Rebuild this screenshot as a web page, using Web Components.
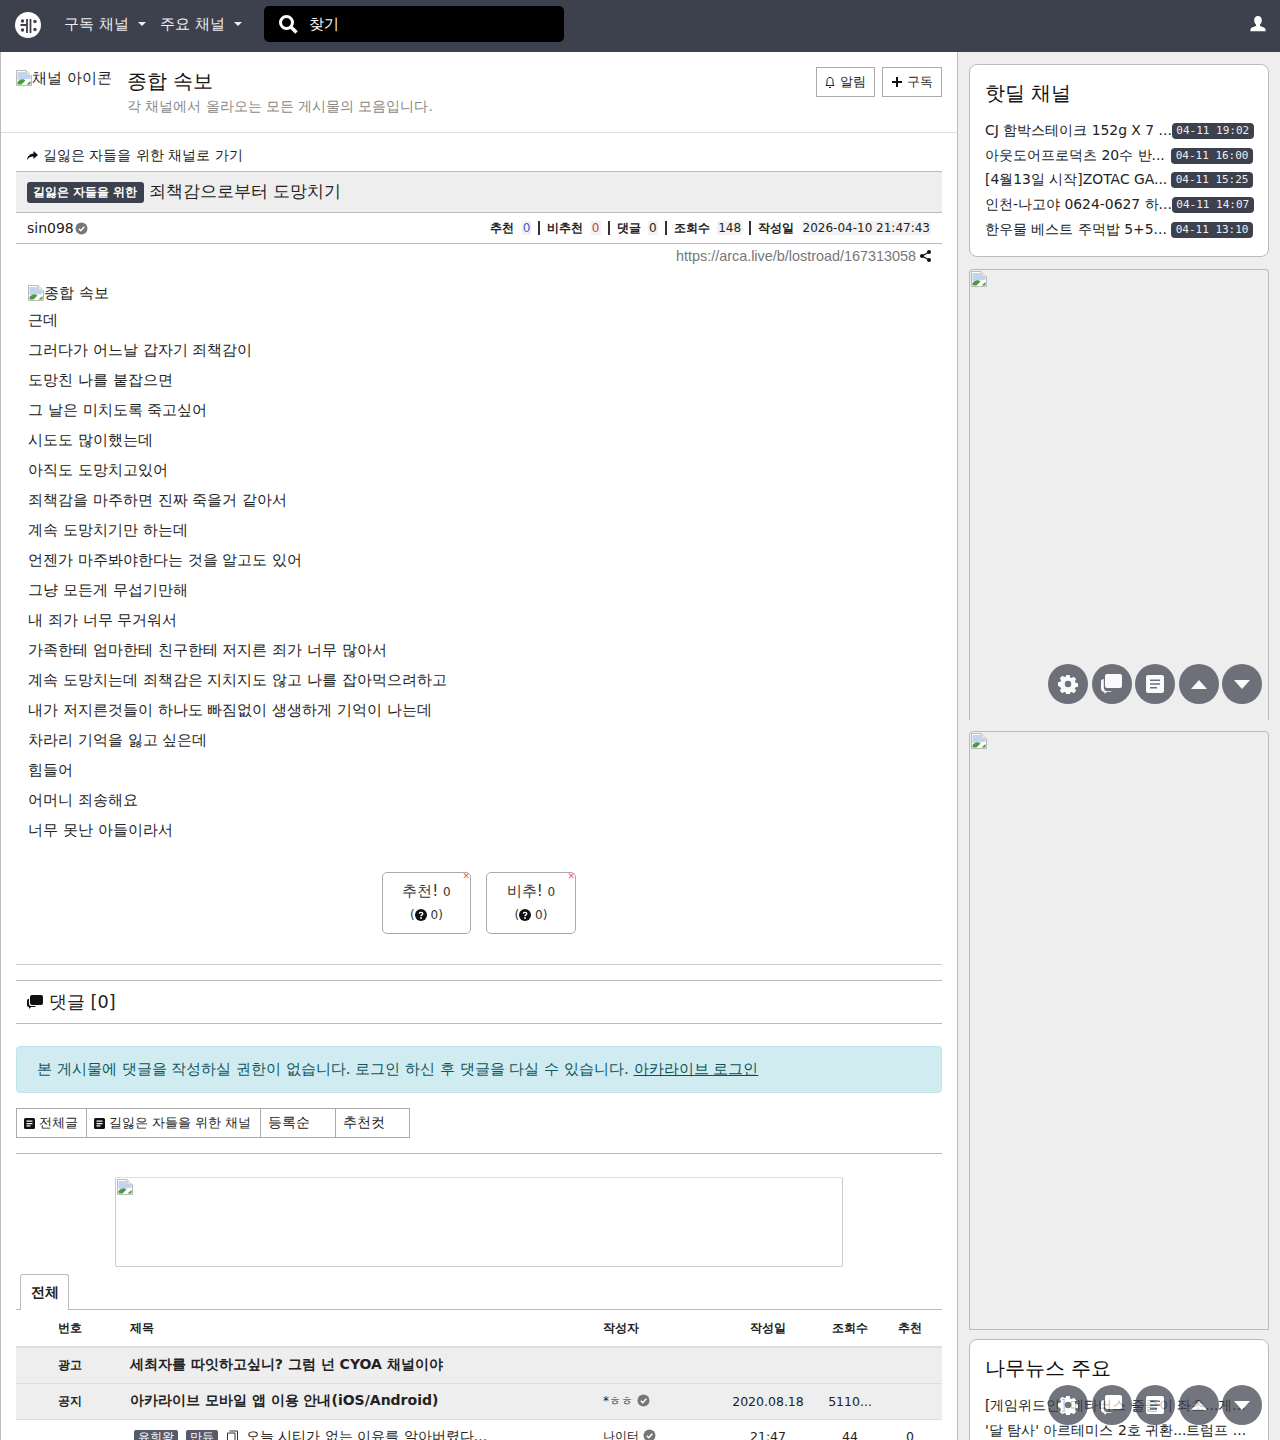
<!DOCTYPE html>
<html lang="ko">
<head>
<meta charset="utf-8">
<title>죄책감으로부터 도망치기</title>
<style>
  html, body { margin: 0; height: 1440px; overflow: hidden; }
  body {
    font-family: "DejaVu Sans", sans-serif;
    font-size: 14px;
    color: #212529;
    background: #eee;
  }
</style>
</head>
<body>
<arca-nav></arca-nav>
<arca-layout>
  <channel-head></channel-head>
  <arca-article></arca-article>
  <comment-area></comment-area>
  <article-list></article-list>
  <side-card slot="side" heading="핫딜 채널" items='[["CJ 함박스테이크 152g X 7 ...","04-11 19:02"],["아웃도어프로덕츠 20수 반...","04-11 16:00"],["[4월13일 시작]ZOTAC GA...","04-11 15:25"],["인천-나고야 0624-0627 하...","04-11 14:07"],["한우물 베스트 주먹밥 5+5...","04-11 13:10"]]'></side-card>
  <side-ad slot="side" style="height:451px"><float-tools></float-tools></side-ad>
  <side-ad slot="side" closed style="height:599px;margin-top:-1px"></side-ad>
  <side-card slot="side" heading="나무뉴스 주요" style="margin-top:-3px" items='[["[게임위드인] 메타버스 줄줄이 좌초...게...",""],["&#39;달 탐사&#39; 아르테미스 2호 귀환...트럼프 ...",""]]'></side-card>
  <float-tools slot="side" style="top:1333px"></float-tools>
</arca-layout>

<script>
const BROKEN = `<svg width="16" height="16" viewBox="0 0 16 16" style="flex:none"><path d="M.5.5H10L15.5 6v9.5H.5z" fill="#fff" stroke="#bbb"/><path d="M10 .5V6h5.5" fill="#e4e4e4" stroke="#bbb"/><path d="M1.5 2h8v4h5v3L1.5 10z" fill="#c3d4f3"/><path d="M1.5 14.5V12c3-3 5-3.5 8-1.5l-4 4z" fill="#4b9a3c"/><path d="M10.5 14.5l4-3.5v3.5z" fill="#4b9a3c"/></svg>`;
const CHECK = `<svg width="13" height="13" viewBox="0 0 13 13" style="vertical-align:-2px"><circle cx="6.5" cy="6.5" r="6" fill="#777"/><path d="M3.8 6.7l2 2 3.5-4" fill="none" stroke="#fff" stroke-width="1.5"/></svg>`;
const DOC = `<svg width="11" height="11" viewBox="0 0 11 11" style="vertical-align:-1px"><path fill-rule="evenodd" d="M1.5 0h8A1.5 1.5 0 0 1 11 1.5v8A1.5 1.5 0 0 1 9.5 11h-8A1.5 1.5 0 0 1 0 9.500v-8A1.5 1.5 0 0 1 1.5 0zM2.500 2.500v1.300h6V2.500zm0 2.400v1.300h6V4.900zm0 2.400v1.300h4V7.300z" fill="#111"/></svg>`;

class ArcaNav extends HTMLElement {
  constructor() {
    super();
    this.attachShadow({ mode: 'open' }).innerHTML = `
      <style>
        :host { display: flex; align-items: center; height: 52px; box-sizing: border-box; padding: 0 0 4px 15px; background: #3d414d; color: #fff; }
        .logo { width: 26px; height: 26px; flex: none; margin: 2px 23px 0 0; }
        .menu { display: flex; align-items: center; font-size: 14.700px; color: #f0f0f0; margin-right: 14.500px; white-space: nowrap; }
        .menu i { width: 0; height: 0; border: 4px solid transparent; border-top-color: #f0f0f0; border-bottom: 0; margin-left: 9px; }
        .search { display: flex; align-items: center; width: 300px; height: 36px; background: #000; border-radius: 5px; margin-left: 8px; font-size: 15px; }
        .search svg { margin: 0 11px 0 14px; }
        .user { margin-left: auto; margin-right: 14px; }
      </style>
      <svg class="logo" viewBox="0 0 26 26"><circle cx="13" cy="13" r="13" fill="#fff"/><path d="M12 7v14M15.500 7v14M5.500 13H12" stroke="#3d414d" stroke-width="1.800" fill="none"/><circle cx="7.500" cy="9" r="1.700" fill="#3d414d"/><circle cx="7.500" cy="18" r="1.700" fill="#3d414d"/><circle cx="20" cy="9.500" r="1.700" fill="#3d414d"/><circle cx="20" cy="17.500" r="1.700" fill="#3d414d"/></svg>
      <div class="menu">구독 채널<i></i></div>
      <div class="menu">주요 채널<i></i></div>
      <div class="search">
        <svg width="20" height="20" viewBox="0 0 20 20"><circle cx="8.500" cy="8.500" r="6" fill="none" stroke="#fff" stroke-width="3"/><path d="M13 13l5.500 5.500" stroke="#fff" stroke-width="3.500"/></svg>
        찾기
      </div>
      <svg class="user" width="16" height="16" viewBox="0 0 16 16"><path fill="#fff" d="M8 0c2.500 0 3.800 1.800 3.800 4.300 0 1.700-.7 3.400-1.800 4.200v1.300c0 .6 4.800 1.500 5.400 3.200.2.600.2 1.500.2 2.200H.4c0-.7 0-1.600.2-2.200C1.200 11.300 6 10.400 6 9.800V8.500C4.900 7.700 4.200 6 4.200 4.300 4.200 1.800 5.500 0 8 0z"/></svg>`;
  }
}

class ArcaLayout extends HTMLElement {
  constructor() {
    super();
    this.attachShadow({ mode: 'open' }).innerHTML = `
      <style>
        :host { display: grid; grid-template-columns: 958px 322px; position: relative; }
        main { background: #fff; border: solid #bbb; border-width: 0 1px; height: 1388px; overflow: hidden; box-sizing: border-box; }
        aside { padding: 12px 11px 0; display: flex; flex-direction: column; gap: 12px; height: 1388px; box-sizing: border-box; overflow: hidden; }
      </style>
      <main><slot></slot></main>
      <aside><slot name="side"></slot></aside>`;
  }
}

class ChannelHead extends HTMLElement {
  constructor() {
    super();
    this.attachShadow({ mode: 'open' }).innerHTML = `
      <style>
        :host { display: flex; height: 81px; box-sizing: border-box; border-bottom: 1px solid #ddd; padding: 15px 15px 0; }
        .icon { display: flex; align-items: flex-start; width: 95px; height: 19px; overflow: hidden; font-size: 15px; color: #222; margin: 1px 16px 0 0; white-space: nowrap; line-height: 20px; }
        .icon svg { margin-top: 2px; }
        h1 { font-size: 20px; font-weight: 400; margin: -1px 0 0; line-height: 30px; color: #111; }
        p { margin: -1px 0 0; color: #888; font-size: 13.500px; line-height: 22px; }
        .btns { margin-left: auto; display: flex; gap: 7px; align-items: flex-start; }
        .btn { display: flex; align-items: center; justify-content: center; gap: 5px; height: 30px; box-sizing: border-box; border: 1px solid #aaa; font-size: 13px; color: #222; }
      </style>
      <div class="icon">${BROKEN}채널 아이콘</div>
      <div><h1>종합 속보</h1><p>각 채널에서 올라오는 모든 게시물의 모음입니다.</p></div>
      <div class="btns">
        <div class="btn" style="width:59px"><svg width="10" height="13" viewBox="0 0 10 13"><path d="M5 1.500c-2 0-3 1.500-3 3.500v3L1 9.500h8L8 8V5c0-2-1-3.500-3-3.500zM4 11.500h2" fill="none" stroke="#222"/></svg>알림</div>
        <div class="btn" style="width:60px"><svg width="10" height="10" viewBox="0 0 10 10"><path d="M5 0v10M0 5h10" stroke="#111" stroke-width="2"/></svg>구독</div>
      </div>`;
  }
}

class ArcaArticle extends HTMLElement {
  constructor() {
    super();
    const lines = ['그러다가 어느날 갑자기 죄책감이', '도망친 나를 붙잡으면', '그 날은 미치도록 죽고싶어', '시도도 많이했는데', '아직도 도망치고있어', '죄책감을 마주하면 진짜 죽을거 같아서', '계속 도망치기만 하는데', '언젠가 마주봐야한다는 것을 알고도 있어', '그냥 모든게 무섭기만해', '내 죄가 너무 무거워서', '가족한테 엄마한테 친구한테 저지른 죄가 너무 많아서', '계속 도망치는데 죄책감은 지치지도 않고 나를 잡아먹으려하고', '내가 저지른것들이 하나도 빠짐없이 생생하게 기억이 나는데', '차라리 기억을 잃고 싶은데', '힘들어', '어머니 죄송해요', '너무 못난 아들이라서'];
    const stat = (label, val, cls = '') => `<b>${label}</b><span class="v ${cls}">${val}</span>`;
    const q = () => `<svg width="12" height="12" viewBox="0 0 12 12"><circle cx="6" cy="6" r="6" fill="#111"/><path d="M4.200 4.600C4.400 3 7.800 3 7.800 4.800 7.800 6 6 5.800 6 7.200" fill="none" stroke="#fff" stroke-width="1.300"/><circle cx="6" cy="9" r=".9" fill="#fff"/></svg>`;
    this.attachShadow({ mode: 'open' }).innerHTML = `
      <style>
        :host { display: block; padding: 0 15px; }
        .back { height: 38px; display: flex; align-items: center; gap: 5px; padding: 7px 12px 0 11px; box-sizing: border-box; font-size: 13.900px; color: #222; }
        .title { height: 42px; box-sizing: border-box; background: #eee; border: solid #bbb; border-width: 1px 0; display: flex; align-items: center; padding: 0 0 2px 11px; font-size: 17px; color: #222; }
        .badge { background: #3d414d; color: #fff; font-size: 12px; font-weight: 700; height: 21px; line-height: 21px; padding: 0 6.500px 0 6px; border-radius: 3px; margin: 2px 5px 0 0; }
        .info { height: 30px; border-bottom: 1px solid #bbb; display: flex; align-items: center; padding: 0 11px 0 11px; font-size: 14px; color: #222; }
        .author svg { margin-left: 1px; }
        .stats { margin-left: auto; display: flex; align-items: center; font-size: 12px; }
        .stats b { font-size: 12px; }
        .v { background: #f2f2f2; margin-left: 7.500px; padding: 0 1px; }
        .blue { color: #3d5fd0; }
        .red { color: #c44; }
        .sep { width: 2px; height: 14px; background: #333; margin: 0 7px; }
        .url { height: 24px; display: flex; align-items: center; justify-content: flex-end; padding-right: 11px; gap: 4px; font: 14.400px "Liberation Sans", sans-serif; color: #777; }
        .body { padding: 10px 12px 0; font-size: 15px; color: #222; }
        .alt { display: flex; height: 30px; align-items: center; }
        .body p { margin: 0; height: 30px; line-height: 30px; }
        .votes { display: flex; justify-content: center; gap: 15px; margin: 27px 0 30px; }
        .vote { position: relative; width: 89px; height: 62px; box-sizing: border-box; border: 1px solid #aaa; border-radius: 5px; text-align: center; color: #333; padding-top: 8px; font-size: 15px; line-height: 20px; }
        .vote + .vote { width: 90px; }
        .vote small { font-size: 12px; }
        .vote div { font-size: 12px; margin-top: 3px; }
        .vote svg { vertical-align: -2px; }
        .x { position: absolute; top: -1px; right: 0; color: #e66; font-size: 9px; line-height: 9px; }
        hr { border: 0; border-top: 1px solid #ccc; margin: 0; }
      </style>
      <div class="back"><svg width="11" height="9" viewBox="0 0 11 9"><path d="M6.500 0L11 4 6.500 8V5.500C3.500 5.500 1.500 6.500 0 9c.3-3.500 2.500-6 6.500-6.500z" fill="#111"/></svg>길잃은 자들을 위한 채널로 가기</div>
      <div class="title"><span class="badge">길잃은 자들을 위한</span>죄책감으로부터 도망치기</div>
      <div class="info">
        <span class="author">sin098${CHECK}</span>
        <div class="stats">
          ${stat('추천', 0, 'blue')}<i class="sep"></i>${stat('비추천', 0, 'red')}<i class="sep"></i>${stat('댓글', 0)}<i class="sep"></i>${stat('조회수', 148)}<i class="sep"></i>${stat('작성일', '2026-04-10 21:47:43')}
        </div>
      </div>
      <div class="url">https://arca.live/b/lostroad/167313058<svg width="11" height="12" viewBox="0 0 11 12"><circle cx="2" cy="6" r="2" fill="#111"/><circle cx="9" cy="2" r="2" fill="#111"/><circle cx="9" cy="10" r="2" fill="#111"/><path d="M2 6l7-4M2 6l7 4" stroke="#111" stroke-width="1.300"/></svg></div>
      <div class="body">
        <div class="alt">${BROKEN}종합 속보</div>
        <p style="margin-top:-3px">근데</p>
        ${lines.map(l => `<p>${l}</p>`).join('')}
        <div class="votes">
          <div class="vote"><span class="x">✕</span>추천! <small>0</small><div>(${q()} 0)</div></div>
          <div class="vote"><span class="x">✕</span>비추! <small>0</small><div>(${q()} 0)</div></div>
        </div>
      </div>
      <hr>`;
  }
}

class CommentArea extends HTMLElement {
  constructor() {
    super();
    this.attachShadow({ mode: 'open' }).innerHTML = `
      <style>
        :host { display: block; padding: 15px 15px 0; }
        .head { height: 44px; box-sizing: border-box; border: solid #bbb; border-width: 1px 0; display: flex; align-items: center; gap: 6px; padding: 0 0 1px 11px; font-size: 17.600px; color: #222; }
        .alert { margin-top: 22px; height: 47px; box-sizing: border-box; background: #d1ecf1; border: 1px solid #bee5eb; border-radius: 4px; color: #0c5460; padding: 0 20px 1px; display: flex; align-items: center; font-size: 15px; white-space: pre; }
        .alert u { color: #0b4f5a; }
        .tabs { display: flex; margin-top: 15px; }
        .tab { box-sizing: border-box; height: 30px; border: 1px solid #aaa; margin-left: -1px; display: flex; align-items: center; padding: 0 7px; font-size: 13px; gap: 4px; color: #222; white-space: nowrap; }
        .tab:first-child { margin-left: 0; }
        .plain { width: 76px; font-size: 14px; padding-bottom: 1px; }
        hr { border: 0; border-top: 1px solid #bbb; margin: 15px 0 0; }
      </style>
      <div class="head"><svg width="16" height="14" viewBox="0 0 16 14"><path d="M5 0h9a2 2 0 0 1 2 2v6a2 2 0 0 1-2 2H5a2 2 0 0 1-2-2V2a2 2 0 0 1 2-2z" fill="#111"/><path d="M1.500 4H2v5c0 1 1 2 2 2h5l-1 1H4l-2 2v-2c-1 0-2-.5-2-2V5.500C0 4.700.7 4 1.500 4z" fill="#111"/></svg>댓글 [0]</div>
      <div class="alert">본 게시물에 댓글을 작성하실 권한이 없습니다. 로그인 하신 후 댓글을 다실 수 있습니다. <u>아카라이브 로그인</u></div>
      <div class="tabs">
        <div class="tab" style="width:71px">${DOC}전체글</div>
        <div class="tab" style="width:175px">${DOC}길잃은 자들을 위한 채널</div>
        <div class="tab plain">등록순</div>
        <div class="tab plain" style="width:75px">추천컷</div>
      </div>
      <hr>`;
  }
}

class ArticleList extends HTMLElement {
  constructor() {
    super();
    this.attachShadow({ mode: 'open' }).innerHTML = `
      <style>
        :host { display: block; padding: 0 15px; }
        .ad { box-sizing: border-box; width: 728px; height: 90px; margin: 23px auto 7px; border: 1px solid #ccc; border-top-color: #ddd; border-radius: 2px; padding: 1px; }
        .tabs { height: 35px; border-bottom: 1px solid #bbb; padding-left: 4px; display: flex; }
        .tabs b { box-sizing: border-box; width: 49px; height: 36px; border: 1px solid #bbb; border-bottom: 0; border-radius: 3px 3px 0 0; background: #fff; text-align: center; line-height: 34px; font-size: 14.400px; color: #222; }
        .row { display: grid; grid-template-columns: 108px 479px 123px 84px 80px 40px; box-sizing: border-box; height: 36px; align-items: center; border-bottom: 1px solid #ddd; font-size: 12.500px; color: #222; white-space: nowrap; }
        .row > :nth-child(1), .row > :nth-child(4), .row > :nth-child(5), .row > :nth-child(6) { text-align: center; }
        .row > :nth-child(2) { padding-left: 6px; }
        .hd { height: 38px; border-bottom: 2px solid #ddd; padding-top: 1px; font-size: 12px; font-weight: 700; }
        .fill { background: #eee; padding-bottom: 1px; }
        .no { font-size: 12px; font-weight: 700; }
        .tt { font-weight: 700; font-size: 14px; }
        .sm { font-size: 12px; }
        .tag { display: inline-block; background: #555a68; color: #fff; font-size: 12px; font-style: normal; padding: 0 4px; border-radius: 2px; margin-right: 8px; line-height: 15px; }
        .last { height: 33px; border: 0; }
        .row > .ttl { padding-left: 10px; font-size: 14px; }
        svg { vertical-align: -2px; }
      </style>
      <div class="ad">${BROKEN}</div>
      <div class="tabs"><b>전체</b></div>
      <div class="row hd"><span>번호</span><span>제목</span><span>작성자</span><span>작성일</span><span>조회수</span><span>추천</span></div>
      <div class="row fill"><span class="no">광고</span><span class="tt">세최자를 따잇하고싶니? 그럼 넌 CYOA 채널이야</span><span></span><span></span><span></span><span></span></div>
      <div class="row fill"><span class="no">공지</span><span class="tt">아카라이브 모바일 앱 이용 안내(iOS/Android)</span><span class="sm">*ㅎㅎ ${CHECK}</span><span>2020.08.18</span><span>5110...</span><span></span></div>
      <div class="row last"><span></span><span class="ttl"><i class="tag">유희왕</i><i class="tag">만듀</i><svg width="13" height="13" viewBox="0 0 13 13" style="margin-right:7px"><path d="M3.500 1h8v10M1.500 3h7.500v9.500H1.500z" fill="none" stroke="#333"/></svg>오늘 시티가 없는 이유를 알아버렸다...</span><span class="sm">나이터 ${CHECK}</span><span>21:47</span><span>44</span><span>0</span></div>`;
  }
}

class SideCard extends HTMLElement {
  constructor() {
    super();
    this.attachShadow({ mode: 'open' }).innerHTML = `
      <style>
        :host { display: block; box-sizing: border-box; height: 193px; background: #fff; border: 1px solid #bbb; border-radius: 8px; padding: 13px 15px 0; flex: none; }
        h2 { margin: 0 0 11px; font-size: 20px; font-weight: 400; line-height: 30px; color: #111; }
        .item { display: flex; justify-content: space-between; align-items: center; height: 24.600px; font-size: 13.900px; color: #222; white-space: nowrap; }
        time { font: 11px "DejaVu Sans Mono", monospace; background: #3d414d; color: #eee; border-radius: 4px; padding: 0 4.500px; line-height: 16px; }
      </style>
      <h2></h2><div class="list"></div>`;
  }
  connectedCallback() {
    this.shadowRoot.querySelector('h2').textContent = this.getAttribute('heading');
    const list = this.shadowRoot.querySelector('.list');
    for (const [text, time] of JSON.parse(this.getAttribute('items'))) {
      const row = document.createElement('div');
      row.className = 'item';
      row.innerHTML = `<span></span>${time ? `<time>${time}</time>` : ''}`;
      row.firstChild.textContent = text;
      list.append(row);
    }
  }
}

class SideAd extends HTMLElement {
  constructor() {
    super();
    this.attachShadow({ mode: 'open' }).innerHTML = `
      <style>
        :host { display: block; position: relative; flex: none; box-sizing: border-box; border: 1px solid #bbb; border-bottom: 0; border-radius: 4px 4px 0 0; padding: 1px; }
        :host([closed]) { border-bottom: 1px solid #bbb; }
      </style>
      ${BROKEN}<slot></slot>`;
  }
}

class FloatTools extends HTMLElement {
  constructor() {
    super();
    this.attachShadow({ mode: 'open' }).innerHTML = `
      <style>
        :host { position: absolute; display: flex; gap: 3.500px; right: 6px; bottom: 16px; z-index: 2; }
        :host([slot]) { bottom: auto; right: 18px; }
        div { width: 40px; height: 40px; border-radius: 50%; background: #3d414d; opacity: .72; display: flex; align-items: center; justify-content: center; }
      </style>
      <div><svg width="20" height="20" viewBox="0 0 20 20"><path fill="#fff" fill-rule="evenodd" d="M8.300 1h3.400l.5 2.400 1.500.7 2.100-1.300 2.400 2.400-1.300 2.100.7 1.500 2.400.5v3.400l-2.400.5-.7 1.500 1.300 2.100-2.400 2.400-2.100-1.300-1.500.7-.5 2.400H8.300l-.5-2.400-1.500-.7-2.100 1.300-2.400-2.400 1.300-2.100-.7-1.500L0 11.700V8.300l2.400-.5.7-1.500-1.300-2.100 2.400-2.400 2.100 1.300 1.500-.7zM10 6.800a3.200 3.200 0 1 0 0 6.400 3.200 3.200 0 0 0 0-6.400z"/></svg></div>
      <div><svg width="21" height="20" viewBox="0 0 21 20"><path fill="#fff" d="M6 0H19a2 2 0 0 1 2 2v10a2 2 0 0 1-2 2H6a2 2 0 0 1-2-2V2a2 2 0 0 1 2-2z"/><path fill="#fff" d="M2.800 5v8.500c0 1.500 1.200 3.700 2.700 3.700H11L9.500 18H6l-2.500 2V18C1.500 18 0 16.500 0 14.500V7.500C0 6 1.300 5 2.800 5z"/></svg></div>
      <div><svg width="20" height="20" viewBox="0 0 20 20"><path fill="#fff" fill-rule="evenodd" d="M3 1h14a2 2 0 0 1 2 2v14a2 2 0 0 1-2 2H3a2 2 0 0 1-2-2V3a2 2 0 0 1 2-2zm2 4.500V7h10V5.500zm0 3.800v1.500h10V9.300zm0 3.700v1.500h7V13z"/></svg></div>
      <div><svg width="16" height="9" viewBox="0 0 16 9"><path fill="#fff" d="M8 0l8 9H0z"/></svg></div>
      <div><svg width="16" height="9" viewBox="0 0 16 9"><path fill="#fff" d="M0 0h16L8 9z"/></svg></div>`;
  }
}

customElements.define('arca-nav', ArcaNav);
customElements.define('arca-layout', ArcaLayout);
customElements.define('channel-head', ChannelHead);
customElements.define('arca-article', ArcaArticle);
customElements.define('comment-area', CommentArea);
customElements.define('article-list', ArticleList);
customElements.define('side-card', SideCard);
customElements.define('side-ad', SideAd);
customElements.define('float-tools', FloatTools);
</script>
</body>
</html>
